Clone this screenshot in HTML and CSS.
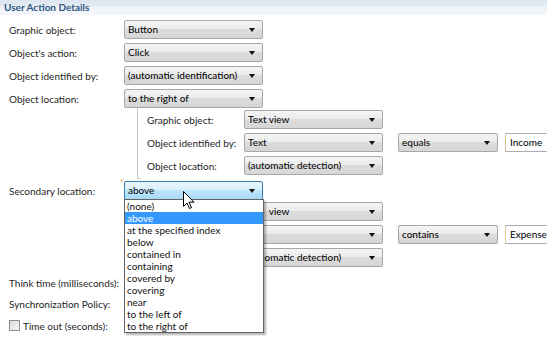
FILE: index.html
```html
<!DOCTYPE html>
<html lang="en">
<head>
  <meta charset="UTF-8">
  <title>User Action Details</title>
  <link rel="stylesheet" href="styles.css">
</head>
<body>
  <div class="section">
    <div class="section-title">User Action Details</div>

    <div class="form">
      <div class="row">
        <span class="label">Graphic object:</span>
        <div class="combo">Button</div>
      </div>
      <div class="row">
        <span class="label">Object's action:</span>
        <div class="combo">Click</div>
      </div>
      <div class="row">
        <span class="label">Object identified by:</span>
        <div class="combo">(automatic identification)</div>
      </div>
      <div class="row">
        <span class="label">Object location:</span>
        <div class="combo">to the right of</div>
      </div>

      <div class="nested">
        <div class="row">
          <span class="label sub">Graphic object:</span>
          <div class="combo">Text view</div>
        </div>
        <div class="row">
          <span class="label sub">Object identified by:</span>
          <div class="combo">Text</div>
          <div class="combo small">equals</div>
          <div class="text-field">Income</div>
        </div>
        <div class="row">
          <span class="label sub">Object location:</span>
          <div class="combo">(automatic detection)</div>
        </div>
      </div>

      <div class="row">
        <span class="label">Secondary location:</span>
        <div class="combo-wrap">
          <span class="required">*</span>
          <div class="combo focused">above</div>
          <ul class="dropdown">
            <li>(none)</li>
            <li class="selected">above</li>
            <li>at the specified index</li>
            <li>below</li>
            <li>contained in</li>
            <li>containing</li>
            <li>covered by</li>
            <li>covering</li>
            <li>near</li>
            <li>to the left of</li>
            <li>to the right of</li>
          </ul>
          <svg class="cursor" width="13" height="19" viewBox="0 0 13 19">
            <path d="M0.5 0.5 L0.5 15.5 L4 12 L6.5 17.5 L8.5 16.6 L6 11.2 L11 11.2 Z" fill="#fff" stroke="#000" stroke-width="1"/>
          </svg>
        </div>
      </div>

      <!-- second target, mostly hidden under the open list -->
      <div class="nested">
        <div class="row">
          <span class="label sub covered">Graphic object:</span>
          <div class="combo"><span class="covered">Text </span>view</div>
        </div>
        <div class="row">
          <span class="label sub covered">Object identified by:</span>
          <div class="combo"><span class="covered">Text</span></div>
          <div class="combo small">contains</div>
          <div class="text-field">Expense</div>
        </div>
        <div class="row">
          <span class="label sub covered">Object location:</span>
          <div class="combo"><span class="covered">(aut</span>omatic detection)</div>
        </div>
      </div>

      <div class="row">
        <span class="label">Think time (milliseconds):</span>
      </div>
      <div class="row short">
        <span class="label">Synchronization Policy:</span>
      </div>
      <div class="row">
        <label class="check"><span class="box"></span>Time out (seconds):</label>
      </div>
    </div>
  </div>
</body>
</html>
```

FILE: styles.css
```css
body {
  margin: 0;
  background: #ffffff;
  font-family: Lato, "Liberation Sans", sans-serif;
  font-size: 10px;
  color: #1e1e1e;
  overflow: hidden;
}
.section-title {
  height: 15px;
  line-height: 15px;
  padding-left: 4px;
  font-weight: bold;
  font-size: 10px;
  color: #2b5580;
  background: linear-gradient(#dde6f0 0, #e2e9f1 40%, #eff3f8 45%, #f3f6fa 100%);
  margin-bottom: 3px;
}
.form {
  padding-left: 9px;
}
.row {
  display: flex;
  align-items: center;
  height: 23px;
}
.row.short {
  height: 20px;
}
.label {
  width: 115px;
  flex-shrink: 0;
  white-space: nowrap;
}
.label.sub {
  width: 97px;
}
.covered {
  visibility: hidden;
}
.combo {
  position: relative;
  box-sizing: border-box;
  width: 139px;
  height: 19px;
  line-height: 17px;
  padding-left: 3px;
  border: 1px solid #a7a7a7;
  border-radius: 2px;
  background: linear-gradient(#f4f4f4 0, #ececec 45%, #dcdcdc 50%, #d6d6d6 100%);
  color: #000;
  white-space: nowrap;
  overflow: hidden;
  flex-shrink: 0;
}
.combo::after {
  content: "";
  position: absolute;
  right: 7px;
  top: 7px;
  border-left: 3px solid transparent;
  border-right: 3px solid transparent;
  border-top: 4px solid #111;
}
.combo.small {
  width: 100px;
  margin-left: 15px;
}
.combo.focused {
  border-color: #3c7fb1;
  background: linear-gradient(#eaf6fd 0, #d9f0fc 45%, #bee6fd 50%, #a7d9f5 100%);
}
.text-field {
  box-sizing: border-box;
  height: 19px;
  line-height: 16px;
  margin-left: 7px;
  padding-left: 4px;
  width: 60px;
  flex-shrink: 0;
  border: 1px solid #abadb3;
  border-left-color: #e2c9a0;
  border-right: none;
  color: #000;
}
.nested {
  margin-left: 128px;
  margin-top: -2px;
  padding-left: 9px;
  border-left: 1px solid #c8c8c8;
  position: relative;
  padding-bottom: 2px;
}
.nested::after {
  content: "";
  position: absolute;
  left: 0;
  bottom: 0;
  width: 3px;
  border-bottom: 1px solid #c8c8c8;
}
.combo-wrap {
  position: relative;
}
.required {
  position: absolute;
  left: -4px;
  top: -3px;
  font-size: 9px;
  line-height: 9px;
  color: #e8a33c;
  z-index: 2;
}
.dropdown {
  position: absolute;
  left: 0;
  top: 18px;
  width: 138px;
  margin: 0;
  padding: 0;
  list-style: none;
  background: #fff;
  border: 1px solid #646464;
  box-shadow: 2px 2px 2px rgba(0, 0, 0, 0.3);
  z-index: 3;
}
.dropdown li {
  height: 12px;
  line-height: 12px;
  padding-left: 2px;
  white-space: nowrap;
  color: #111;
}
.dropdown li.selected {
  background: #3399ff;
  color: #fff;
}
.cursor {
  position: absolute;
  left: 59px;
  top: 10px;
  z-index: 4;
}
.check {
  display: flex;
  align-items: center;
}
.box {
  box-sizing: border-box;
  width: 11px;
  height: 11px;
  margin-right: 3px;
  border: 1px solid #8e8f8f;
  background: linear-gradient(135deg, #dcdcdc, #f8f8f8);
}
```
